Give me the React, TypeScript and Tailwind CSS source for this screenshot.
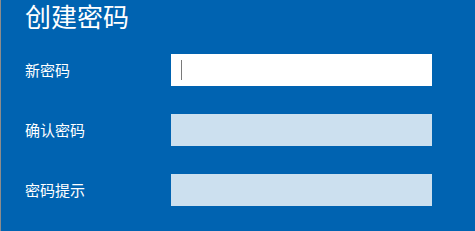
import React from "react";

const Row = ({ label, children }: { label: string; children: React.ReactNode }) => (
  <div className="flex items-center h-8">
    <div className="w-[146px] text-[15px] leading-5 text-white">{label}</div>
    {children}
  </div>
);

export default function App() {
  return (
    <div
      className="w-[475px] h-[231px] bg-[#0063b1] border-l border-[#8c8c8c] overflow-hidden"
      style={{ fontFamily: '"Noto Sans CJK SC", "Noto Sans", sans-serif' }}
    >
      <div className="pl-6">
        <h1 className="text-[26px] leading-[32px] text-white font-normal">创建密码</h1>
        <div className="mt-[22px] flex flex-col gap-[28px]">
          <Row label="新密码">
            <div className="w-[261px] h-8 bg-white flex items-center pl-[10px]">
              <div className="w-px h-5 bg-[#7a7a7a]" />
            </div>
          </Row>
          <Row label="确认密码">
            <div className="w-[261px] h-8 bg-[#cce0ef]" />
          </Row>
          <Row label="密码提示">
            <div className="w-[261px] h-8 bg-[#cce0ef]" />
          </Row>
        </div>
      </div>
    </div>
  );
}
